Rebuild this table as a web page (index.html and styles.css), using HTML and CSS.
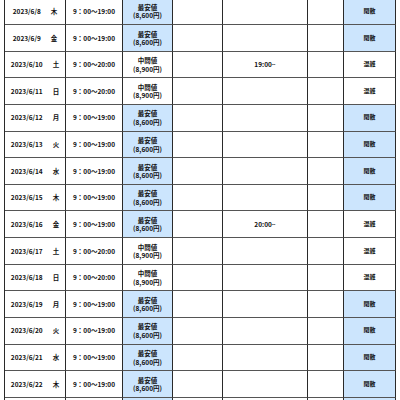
FILE: index.html
```html
<!DOCTYPE html>
<html lang="ja">
<head>
<meta charset="utf-8">
<link rel="stylesheet" href="styles.css">
</head>
<body>
<div class="sheet">
  <div class="c date"><span>2023/6/8</span><span>木</span></div><div class="c">9：00～19:00</div><div class="c price low">最安値<br>(8,600円)</div><div class="c"></div><div class="c"></div><div class="c"></div><div class="c st low">閑散</div>
  <div class="c date"><span>2023/6/9</span><span>金</span></div><div class="c">9：00～19:00</div><div class="c price low">最安値<br>(8,600円)</div><div class="c"></div><div class="c"></div><div class="c"></div><div class="c st low">閑散</div>
  <div class="c date"><span>2023/6/10</span><span>土</span></div><div class="c">9：00～20:00</div><div class="c price">中間値<br>(8,900円)</div><div class="c"></div><div class="c ev">19:00~</div><div class="c"></div><div class="c st">混雑</div>
  <div class="c date"><span>2023/6/11</span><span>日</span></div><div class="c">9：00～20:00</div><div class="c price">中間値<br>(8,900円)</div><div class="c"></div><div class="c"></div><div class="c"></div><div class="c st">混雑</div>
  <div class="c date"><span>2023/6/12</span><span>月</span></div><div class="c">9：00～19:00</div><div class="c price low">最安値<br>(8,600円)</div><div class="c"></div><div class="c"></div><div class="c"></div><div class="c st low">閑散</div>
  <div class="c date"><span>2023/6/13</span><span>火</span></div><div class="c">9：00～19:00</div><div class="c price low">最安値<br>(8,600円)</div><div class="c"></div><div class="c"></div><div class="c"></div><div class="c st low">閑散</div>
  <div class="c date"><span>2023/6/14</span><span>水</span></div><div class="c">9：00～19:00</div><div class="c price low">最安値<br>(8,600円)</div><div class="c"></div><div class="c"></div><div class="c"></div><div class="c st low">閑散</div>
  <div class="c date"><span>2023/6/15</span><span>木</span></div><div class="c">9：00～19:00</div><div class="c price low">最安値<br>(8,600円)</div><div class="c"></div><div class="c"></div><div class="c"></div><div class="c st low">閑散</div>
  <div class="c date"><span>2023/6/16</span><span>金</span></div><div class="c">9：00～19:00</div><div class="c price low">最安値<br>(8,600円)</div><div class="c"></div><div class="c ev">20:00~</div><div class="c"></div><div class="c st">混雑</div>
  <div class="c date"><span>2023/6/17</span><span>土</span></div><div class="c">9：00～20:00</div><div class="c price">中間値<br>(8,900円)</div><div class="c"></div><div class="c"></div><div class="c"></div><div class="c st">混雑</div>
  <div class="c date"><span>2023/6/18</span><span>日</span></div><div class="c">9：00～20:00</div><div class="c price">中間値<br>(8,900円)</div><div class="c"></div><div class="c"></div><div class="c"></div><div class="c st">混雑</div>
  <div class="c date"><span>2023/6/19</span><span>月</span></div><div class="c">9：00～19:00</div><div class="c price low">最安値<br>(8,600円)</div><div class="c"></div><div class="c"></div><div class="c"></div><div class="c st low">閑散</div>
  <div class="c date"><span>2023/6/20</span><span>火</span></div><div class="c">9：00～19:00</div><div class="c price low">最安値<br>(8,600円)</div><div class="c"></div><div class="c"></div><div class="c"></div><div class="c st low">閑散</div>
  <div class="c date"><span>2023/6/21</span><span>水</span></div><div class="c">9：00～19:00</div><div class="c price low">最安値<br>(8,600円)</div><div class="c"></div><div class="c"></div><div class="c"></div><div class="c st low">閑散</div>
  <div class="c date"><span>2023/6/22</span><span>木</span></div><div class="c">9：00～19:00</div><div class="c price low">最安値<br>(8,600円)</div><div class="c"></div><div class="c"></div><div class="c"></div><div class="c st low">閑散</div>
  <div class="c"></div><div class="c"></div><div class="c low"></div><div class="c"></div><div class="c"></div><div class="c"></div><div class="c low"></div>
</div>
</body>
</html>
```
FILE: styles.css
```css
html, body {
  margin: 0;
  padding: 0;
  background: #ffffff;
}
body {
  font-family: "Noto Sans CJK JP", "Liberation Sans", sans-serif;
  font-size: 6.5px;
  font-weight: 700;
  color: #111;
  overflow: hidden;
  height: 400px;
}
.sheet {
  margin: -2.64px 0 0 4px;
  width: 392px;
  display: grid;
  grid-template-columns: 61px 57px 50px 50px 85px 36px 52px;
  grid-auto-rows: 26.64px;
  border-left: 1px solid #2a2a2a;
  border-top: 1px solid #2a2a2a;
}
.c {
  box-sizing: border-box;
  border-right: 1px solid #2a2a2a;
  border-bottom: 1px solid #555;
  display: flex;
  align-items: center;
  justify-content: center;
  text-align: center;
  line-height: 8.5px;
  white-space: nowrap;
}
.date {
  gap: 10px;
}
.low {
  background: #cce5fd;
}
.price {
  display: block;
  padding-top: 4.5px;
}
.st {
  font-size: 6px;
}
```
